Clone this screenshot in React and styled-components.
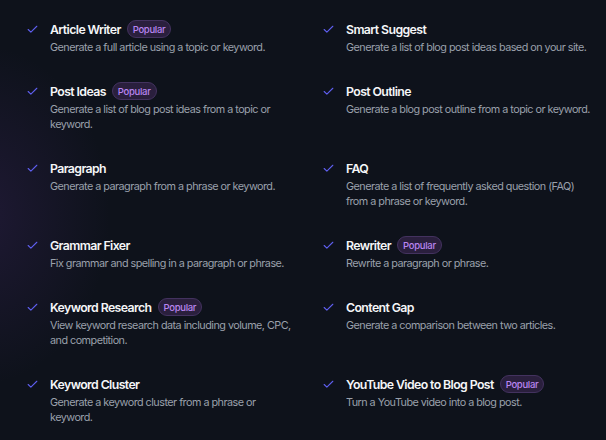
import React from "react";
import styled, { createGlobalStyle } from "styled-components";

const Global = createGlobalStyle`
  html, body { margin: 0; padding: 0; background: #0e121b; }
  body { font-family: Inter, "Noto Sans", sans-serif; -webkit-font-smoothing: antialiased; }
`;

const Page = styled.div`
  position: relative;
  width: 606px;
  height: 440px;
  overflow: hidden;
  background:
    radial-gradient(ellipse 130px 170px at -20px 215px, rgba(90, 50, 140, 0.22), rgba(90, 50, 140, 0) 100%),
    #0e121b;
`;

const Grid = styled.div`
  display: grid;
  grid-template-columns: 296px 296px;
  row-gap: 27px;
  padding: 20px 0 0 26px;
`;

const Item = styled.div`
  display: flex;
  gap: 10px;
  padding-right: 24px;
`;

const CheckBox = styled.div`
  flex: none;
  width: 14px;
  height: 18px;
  display: flex;
  align-items: center;
  color: #5f5ff0;
`;

const Body = styled.div`
  display: flex;
  flex-direction: column;
  min-width: 0;
`;

const TitleRow = styled.div`
  display: flex;
  align-items: center;
  gap: 6px;
  height: 18px;
`;

const Title = styled.span`
  font-size: 12.3px;
  font-weight: 600;
  color: #f5f6f8;
  letter-spacing: -0.6px;
`;

const Badge = styled.span`
  display: inline-flex;
  align-items: center;
  height: 16px;
  padding: 0 5px;
  border-radius: 999px;
  background: #2a1f3d;
  border: 1px solid #43325f;
  color: #b985f0;
  font-size: 9.5px;
  font-weight: 500;
  letter-spacing: -0.3px;
`;

const Desc = styled.p`
  margin: 2px 0 0;
  font-size: 10.8px;
  line-height: 15px;
  color: #9aa0ab;
  letter-spacing: -0.52px;
`;

const Check = () => (
  <svg width="13" height="13" viewBox="0 0 24 24" fill="none" stroke="currentColor" strokeWidth="2" strokeLinecap="round" strokeLinejoin="round">
    <path d="M20 6 9 17l-5-5" />
  </svg>
);

const items = [
  ["Article Writer", true, "Generate a full article using a topic or keyword."],
  ["Smart Suggest", false, "Generate a list of blog post ideas based on your site."],
  ["Post Ideas", true, "Generate a list of blog post ideas from a topic or keyword."],
  ["Post Outline", false, "Generate a blog post outline from a topic or keyword."],
  ["Paragraph", false, "Generate a paragraph from a phrase or keyword."],
  ["FAQ", false, "Generate a list of frequently asked question (FAQ) from a phrase or keyword."],
  ["Grammar Fixer", false, "Fix grammar and spelling in a paragraph or phrase."],
  ["Rewriter", true, "Rewrite a paragraph or phrase."],
  ["Keyword Research", true, "View keyword research data including volume, CPC, and competition."],
  ["Content Gap", false, "Generate a comparison between two articles."],
  ["Keyword Cluster", false, "Generate a keyword cluster from a phrase or keyword."],
  ["YouTube Video to Blog Post", true, "Turn a YouTube video into a blog post."],
];

export default function App() {
  return (
    <Page>
      <Global />
      <Grid>
        {items.map(([t, pop, d]) => (
          <Item key={t}>
            <CheckBox><Check /></CheckBox>
            <Body>
              <TitleRow>
                <Title>{t}</Title>
                {pop && <Badge>Popular</Badge>}
              </TitleRow>
              <Desc>{d}</Desc>
            </Body>
          </Item>
        ))}
      </Grid>
    </Page>
  );
}
